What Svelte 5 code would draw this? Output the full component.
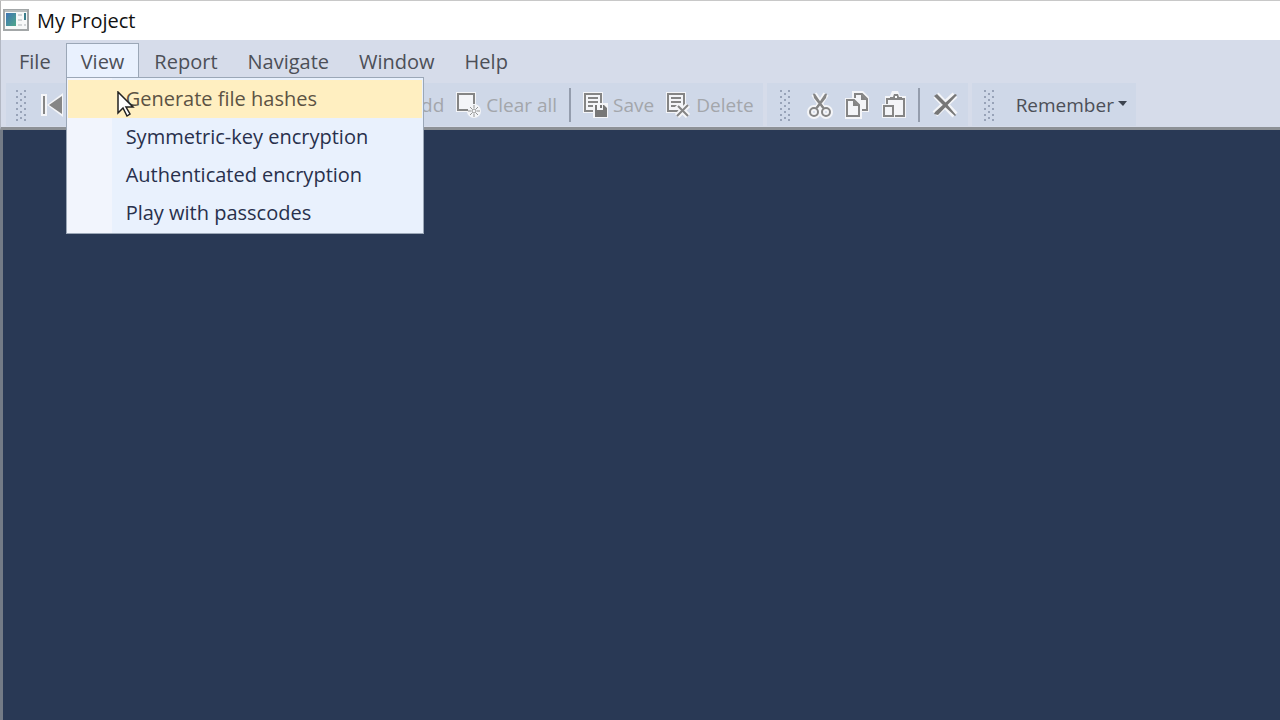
<script lang="ts">
	type Menu = { label: string; items?: string[] };

	const menus: Menu[] = [
		{ label: 'File' },
		{
			label: 'View',
			items: [
				'Generate file hashes',
				'Symmetric-key encryption',
				'Authenticated encryption',
				'Play with passcodes'
			]
		},
		{ label: 'Report' },
		{ label: 'Navigate' },
		{ label: 'Window' },
		{ label: 'Help' }
	];

	let openMenu = $state('View');
	let activeItem = $state('Generate file hashes');

	function toggle(menu: Menu) {
		openMenu = openMenu === menu.label ? '' : menu.label;
	}
</script>

{#snippet grip()}
	<svg class="grip" width="10" height="32" viewBox="0 0 10 32" aria-hidden="true">
		{#each [1, 7, 13, 19, 25, 30] as y}
			<rect x="0" {y} width="2" height="2" />
			<rect x="8" {y} width="2" height="2" />
		{/each}
		{#each [4, 10, 16, 22, 28] as y}
			<rect x="4" {y} width="2" height="2" />
		{/each}
	</svg>
{/snippet}

{#snippet note()}
	<path class="halo" d="M0 0h20v21H0z" />
	<path class="line" d="M2 2h16v17H2z" />
	<path class="line" d="M5 6h10M5 10h10M5 14h6" />
{/snippet}

<div class="window">
	<header class="titlebar">
		<svg width="26" height="22" viewBox="0 0 26 22" aria-hidden="true">
			<defs>
				<linearGradient id="screen" x1="0" y1="0" x2="1" y2="1">
					<stop offset="0" stop-color="#3f74b4" />
					<stop offset="1" stop-color="#4fa88a" />
				</linearGradient>
			</defs>
			<rect x="1" y="1" width="24" height="20" fill="#f7f9f9" stroke="#a3a7a8" stroke-width="2" />
			<path d="M2 2h22" stroke="#b9bdbe" stroke-width="2" />
			<rect x="3" y="4" width="10" height="13" fill="url(#screen)" />
			<path d="M15 6h4M15 11h4M15 16h4M21 16h2" stroke="#d2d6d8" stroke-width="2" />
			<path d="M22 4v7" stroke="#3c7f8c" stroke-width="2" />
		</svg>
		<h1>My Project</h1>
	</header>

	<nav class="menubar">
		{#each menus as menu}
			<div class="menu">
				<button
					type="button"
					class="menu-title"
					class:open={openMenu === menu.label}
					aria-expanded={openMenu === menu.label}
					onclick={() => toggle(menu)}>{menu.label}</button
				>
				{#if menu.items && openMenu === menu.label}
					<div class="dropdown" role="menu">
						{#each menu.items as item}
							<button
								type="button"
								role="menuitem"
								class="menu-item"
								class:active={activeItem === item}
								onmouseenter={() => (activeItem = item)}>{item}</button
							>
						{/each}
						<svg class="pointer" width="18" height="27" viewBox="0 0 18 27" aria-hidden="true">
							<path d="M1 1v21l5-5 4 8 3-2-4-7h7z" fill="#fff" stroke="#222" stroke-width="1.5" />
						</svg>
					</div>
				{/if}
			</div>
		{/each}
	</nav>

	<div class="toolbars">
		<div class="toolbar data" role="toolbar" aria-label="Records">
			{@render grip()}
			<div class="record-nav">
				<button type="button" class="tool" aria-label="Move first" disabled>
					<svg width="24" height="24" viewBox="0 0 24 24" aria-hidden="true">
						<path class="halo" d="M0 1h6v22H0zM6 12L22 0v24z" />
						<path d="M2 3h2v18H2zM8 12l13-9v18z" fill="#868686" />
					</svg>
				</button>
			</div>
			<button type="button" class="tool" disabled>Add</button>
			<button type="button" class="tool" disabled>
				<svg width="26" height="26" viewBox="0 0 26 26" aria-hidden="true">
					<path class="halo" d="M0 0h20v20H0z" />
					<circle class="halo" cx="18" cy="19" r="7" />
					<path d="M12 18H2V2h16v10" class="line" />
					<circle cx="18" cy="19" r="2" class="thin" />
					<path
						class="thin"
						d="M18 13v3M18 22v3M12 19h3M21 19h3M14 15l2 2M20 21l2 2M14 23l2-2M20 17l2-2"
					/>
				</svg>
				Clear all
			</button>
			<span class="separator"></span>
			<button type="button" class="tool" disabled>
				<svg width="26" height="26" viewBox="0 0 26 26" aria-hidden="true">
					{@render note()}
					<path class="halo" d="M10 11h15v15H10z" />
					<path d="M12 13h2v5h6v-5h1l3 3v9H12z" fill="#777" />
					<path d="M17 13h2v3h-2z" fill="#777" />
				</svg>
				Save
			</button>
			<button type="button" class="tool" disabled>
				<svg width="26" height="26" viewBox="0 0 26 26" aria-hidden="true">
					{@render note()}
					<path d="M11 13l11 11M22 13L11 24" stroke="#f4f5f8" stroke-width="6" />
					<path d="M12 14l10 10M22 13L11 24" stroke="#858585" stroke-width="2" />
				</svg>
				Delete
			</button>
		</div>

		<div class="toolbar edit" role="toolbar" aria-label="Edit">
			{@render grip()}
			<button type="button" class="tool" aria-label="Cut">
				<svg width="26" height="28" viewBox="0 0 26 28" aria-hidden="true">
					<g class="outline">
						<path d="M7 3l10 16M19 3L9 19" />
						<circle cx="7" cy="21" r="4" />
						<circle cx="19" cy="21" r="4" />
					</g>
					<path d="M6 2l1 5 8 10 2-1zM20 2l-1 5-8 10-2-1z" fill="#858585" />
					<path d="M7 3l10 15M19 3L9 18" class="line" />
					<circle cx="7" cy="21" r="4" class="line" />
					<circle cx="19" cy="21" r="4" class="line" />
				</svg>
			</button>
			<button type="button" class="tool" aria-label="Copy">
				<svg width="26" height="28" viewBox="0 0 26 28" aria-hidden="true">
					<path class="halo" d="M8 0h11l6 6v15h-7v7H1V7h7z" />
					<path class="line" d="M11 7V3h7l5 5v11h-5" />
					<path class="line" d="M3 9h7l5 5v11H3z" />
					<path d="M17 3v6h6zM9 9v6h6z" fill="#858585" />
				</svg>
			</button>
			<button type="button" class="tool" aria-label="Paste">
				<svg width="26" height="28" viewBox="0 0 26 28" aria-hidden="true">
					<path class="halo" d="M4 5h5l2-5h6l2 5h6v22H1V13h3z" />
					<path class="line" d="M6 13V8h17v17h-9" />
					<path class="line" d="M3 15h9v10H3z" />
					<path d="M9 9V6h3l1-3h4l1 3h3v3z" fill="#858585" />
					<path d="M14 5h2v2h-2z" fill="#fff" />
				</svg>
			</button>
			<span class="separator"></span>
			<button type="button" class="tool" aria-label="Remove">
				<svg width="28" height="28" viewBox="0 0 28 28" aria-hidden="true">
					<path d="M5 4l19 20M24 4L4 23" stroke="#f4f5f8" stroke-width="7" />
					<path d="M3 5l3-2 9 9 10 12-1 1-11-10zM24 3l2 1L7 24l-4-1 1-2z" fill="#777" />
				</svg>
			</button>
		</div>

		<div class="toolbar account" role="toolbar" aria-label="Account">
			{@render grip()}
			<button type="button" class="tool remember" aria-haspopup="menu">
				Remember
				<svg width="9" height="6" viewBox="0 0 9 6" aria-hidden="true">
					<path d="M0 0h9L5 5z" fill="#3c434f" />
				</svg>
			</button>
		</div>
	</div>

	<main class="workspace"></main>
</div>

<style>
	:global(body) {
		margin: 0;
	}

	.window {
		display: flex;
		flex-direction: column;
		min-height: 100vh;
		box-sizing: border-box;
		border-top: 1px solid #c8c8c8;
		background: #d6dcea;
		font-family: 'Open Sans', 'Noto Sans', sans-serif;
		font-size: 20px;
		line-height: 28px;
		color: #4c4f57;
	}

	button {
		padding: 0;
		border: none;
		background: none;
		font: inherit;
		color: inherit;
		white-space: nowrap;
	}

	.titlebar {
		display: flex;
		align-items: center;
		gap: 8px;
		height: 39px;
		padding-left: 2px;
		border-left: 1px solid #b5b5b5;
		background: #fff;
	}

	.titlebar svg {
		margin-bottom: 2px;
	}

	h1 {
		margin: 0;
		font-size: 20px;
		font-weight: 400;
		color: #111;
	}

	/* Menu bar */
	.menubar {
		display: flex;
		height: 36px;
		padding: 3px 0 0 3px;
		border-left: 1px solid #b3b8c4;
	}

	.menu {
		position: relative;
	}

	.menu-title {
		height: 36px;
		padding: 0 14px;
		border: 1px solid transparent;
		border-bottom: none;
	}

	.menu-title.open {
		background: #e9f1fe;
		border-color: #9ba7b7;
	}

	.dropdown {
		position: absolute;
		top: 34px;
		left: 0;
		z-index: 1;
		display: flex;
		flex-direction: column;
		width: 354px;
		padding: 2px 1px 1px;
		border: 1px solid #9ba7b7;
		background: linear-gradient(to right, #f2f5fd 45px, #e9f1fd 45px);
	}

	.menu-item {
		height: 38px;
		padding-left: 58px;
		text-align: left;
		color: #28304c;
	}

	.menu-item.active {
		background: #ffefc1;
		color: #5c5344;
	}

	.pointer {
		position: absolute;
		top: 13px;
		left: 50px;
		pointer-events: none;
	}

	/* Toolbars */
	.toolbars {
		display: flex;
		gap: 4px;
		padding: 4px 0 1px 5px;
		border-left: 1px solid #b3b8c4;
		border-bottom: 3px solid #8d9196;
		font-size: 19px;
	}

	.toolbar {
		display: flex;
		align-items: center;
		height: 43px;
		background: #cfd8e8;
	}

	.grip {
		fill: #98a3b8;
	}

	.tool {
		display: flex;
		align-items: center;
		gap: 4px;
	}

	.tool:disabled {
		color: #a3a6ab;
	}

	.data {
		gap: 12px;
		padding: 0 9px 0 10px;
	}

	.record-nav {
		flex: none;
		width: 356px;
		padding-left: 3px;
	}

	.edit {
		gap: 11px;
		padding: 0 9px 0 13px;
	}

	.edit .grip {
		margin-right: 6px;
	}

	.account {
		gap: 22px;
		padding: 0 9px 0 12px;
	}

	.remember svg {
		margin-bottom: 2px;
	}

	.separator {
		width: 2px;
		height: 34px;
		background: #949dad;
	}

	.halo {
		fill: #f4f5f8;
	}

	.line {
		fill: none;
		stroke: #858585;
		stroke-width: 2;
	}

	.thin {
		fill: none;
		stroke: #959595;
		stroke-width: 1;
	}

	.outline {
		fill: none;
		stroke: #f4f5f8;
		stroke-width: 6;
	}

	.workspace {
		flex: 1;
		border-left: 3px solid #737b86;
		background: #293955;
	}
</style>
